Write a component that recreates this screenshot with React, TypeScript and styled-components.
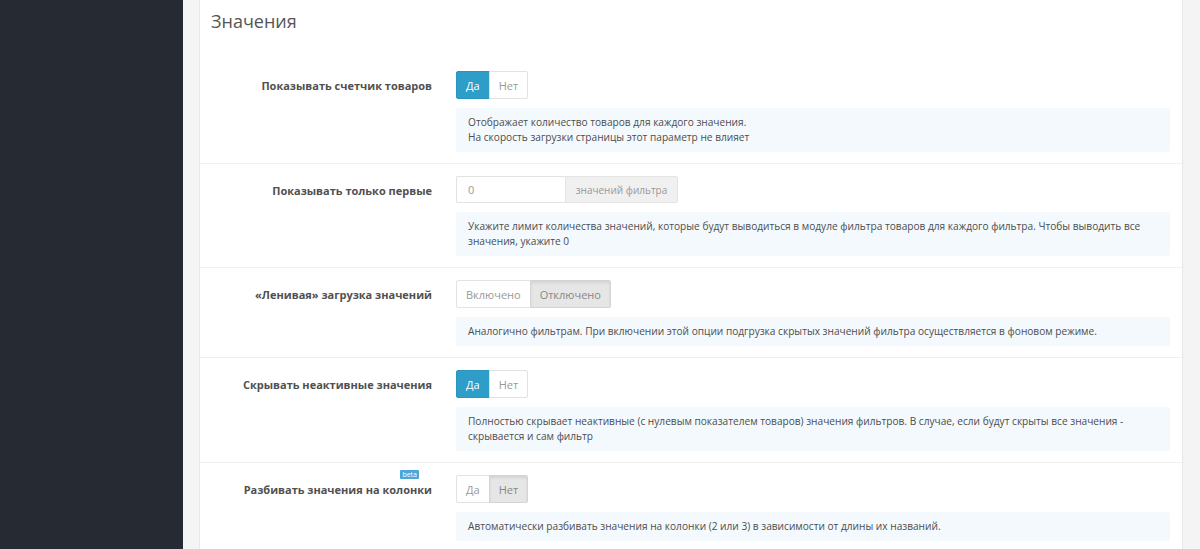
import React from "react";
import styled, { createGlobalStyle } from "styled-components";

const GlobalStyle = createGlobalStyle`
  html, body {
    margin: 0;
    padding: 0;
    height: 100%;
    background: #f4f4f4;
    font-family: "Open Sans", "Liberation Sans", sans-serif;
  }
  #root {
    height: 100%;
  }
  * {
    box-sizing: border-box;
  }
`;

type Choice = { label: string; active?: boolean };

interface SettingRow {
  id: string;
  label: string;
  badge?: string;
  control: "toggle" | "input";
  choices?: Choice[];
  value?: string;
  addon?: string;
  help: React.ReactNode;
}

const rows: SettingRow[] = [
  {
    id: "count",
    label: "Показывать счетчик товаров",
    control: "toggle",
    choices: [{ label: "Да", active: true }, { label: "Нет" }],
    help: (
      <>
        Отображает количество товаров для каждого значения.
        <br />
        На скорость загрузки страницы этот параметр не влияет
      </>
    ),
  },
  {
    id: "limit",
    label: "Показывать только первые",
    control: "input",
    value: "0",
    addon: "значений фильтра",
    help: "Укажите лимит количества значений, которые будут выводиться в модуле фильтра товаров для каждого фильтра. Чтобы выводить все значения, укажите 0",
  },
  {
    id: "lazy",
    label: "«Ленивая» загрузка значений",
    control: "toggle",
    choices: [{ label: "Включено" }, { label: "Отключено", active: true }],
    help: "Аналогично фильтрам. При включении этой опции подгрузка скрытых значений фильтра осуществляется в фоновом режиме.",
  },
  {
    id: "hide",
    label: "Скрывать неактивные значения",
    control: "toggle",
    choices: [{ label: "Да", active: true }, { label: "Нет" }],
    help: "Полностью скрывает неактивные (с нулевым показателем товаров) значения фильтров. В случае, если будут скрыты все значения - скрывается и сам фильтр",
  },
  {
    id: "columns",
    label: "Разбивать значения на колонки",
    badge: "beta",
    control: "toggle",
    choices: [{ label: "Да" }, { label: "Нет", active: true }],
    help: "Автоматически разбивать значения на колонки (2 или 3) в зависимости от длины их названий.",
  },
];

const App: React.FC = () => {
  return (
    <>
      <GlobalStyle />
      <Layout>
        <Sidebar />
        <Main>
          <Panel>
            <PanelHeading>Значения</PanelHeading>
            {rows.map((row) => (
              <FormRow key={row.id}>
                <LabelCell>
                  <Label>
                    {row.label}
                    {row.badge && <Badge>{row.badge}</Badge>}
                  </Label>
                </LabelCell>
                <ControlCell>
                  {row.control === "toggle" ? (
                    <ButtonGroup>
                      {row.choices?.map((c, i) => (
                        <ToggleButton
                          key={c.label}
                          $active={!!c.active}
                          $primary={!!c.active && i === 0}
                        >
                          {c.label}
                        </ToggleButton>
                      ))}
                    </ButtonGroup>
                  ) : (
                    <InputGroup>
                      <TextInput defaultValue={row.value} />
                      <Addon>{row.addon}</Addon>
                    </InputGroup>
                  )}
                  <HelpBlock>{row.help}</HelpBlock>
                </ControlCell>
              </FormRow>
            ))}
          </Panel>
        </Main>
      </Layout>
    </>
  );
};

const Layout = styled.div`
  display: flex;
  height: 549px;
  overflow: hidden;
`;

const Sidebar = styled.aside`
  width: 183px;
  flex-shrink: 0;
  background: #262a33;
`;

const Main = styled.main`
  flex: 1;
  display: flex;
  padding: 0 17px 0 16px;
  background: #f4f4f4;
`;

const Panel = styled.section`
  flex: 1;
  background: #fff;
  border-left: 1px solid #e8e8e8;
  border-right: 1px solid #e8e8e8;
`;

const PanelHeading = styled.h2`
  margin: 0;
  height: 59px;
  padding: 8px 0 0 11px;
  font-size: 18px;
  line-height: 26px;
  font-weight: 400;
  color: #555;
`;

const FormRow = styled.div`
  display: grid;
  grid-template-columns: 232px 1fr;
  column-gap: 24px;
  padding: 12px 12px 11px 0;
  border-bottom: 1px solid #f0f0f0;

  &:last-child {
    border-bottom: none;
  }
`;

const LabelCell = styled.div`
  display: flex;
  justify-content: flex-end;
  align-items: center;
  height: 28px;
`;

const Label = styled.label`
  position: relative;
  font-size: 11px;
  font-weight: 700;
  color: #505050;
  white-space: nowrap;
`;

const Badge = styled.span`
  position: absolute;
  right: 13px;
  top: -12px;
  padding: 0 2px;
  background: #4aa6dc;
  color: #fff;
  font-size: 7px;
  line-height: 9px;
  font-weight: 400;
  border-radius: 1px;
`;

const ControlCell = styled.div`
  display: flex;
  flex-direction: column;
  align-items: flex-start;
  gap: 9px;
`;

const ButtonGroup = styled.div`
  display: inline-flex;
`;

const ToggleButton = styled.button<{ $active: boolean; $primary: boolean }>`
  height: 28px;
  padding: 0 9px;
  font-family: inherit;
  font-size: 11px;
  cursor: pointer;
  border: 1px solid
    ${({ $active, $primary }) =>
      $primary ? "#2b95bf" : $active ? "#d4d4d4" : "#e2e2e2"};
  background: ${({ $active, $primary }) =>
    $primary ? "#2e9dc7" : $active ? "#e6e6e6" : "#fff"};
  color: ${({ $active, $primary }) =>
    $primary ? "#fff" : $active ? "#888" : "#999"};
  box-shadow: ${({ $active, $primary }) =>
    $active && !$primary ? "inset 0 2px 3px rgba(0, 0, 0, 0.08)" : "none"};

  & + & {
    margin-left: -1px;
  }
  &:first-child {
    border-radius: 2px 0 0 2px;
  }
  &:last-child {
    border-radius: 0 2px 2px 0;
  }
`;

const InputGroup = styled.div`
  display: inline-flex;
  height: 27px;
`;

const TextInput = styled.input`
  width: 109px;
  height: 27px;
  padding: 0 11px;
  font-family: inherit;
  font-size: 11px;
  color: #999;
  border: 1px solid #e2e2e2;
  border-right: none;
  border-radius: 2px 0 0 2px;
  outline: none;
`;

const Addon = styled.span`
  display: flex;
  align-items: center;
  justify-content: center;
  width: 113px;
  font-size: 10px;
  white-space: nowrap;
  color: #999;
  background: #f0f0f0;
  border: 1px solid #e4e4e4;
  border-radius: 0 2px 2px 0;
`;

const HelpBlock = styled.div`
  align-self: stretch;
  padding: 7px 12px;
  background: #f4f9fd;
  font-size: 10.15px;
  line-height: 15px;
  color: #4d4d4d;
  border-radius: 2px;
`;

export default App;
